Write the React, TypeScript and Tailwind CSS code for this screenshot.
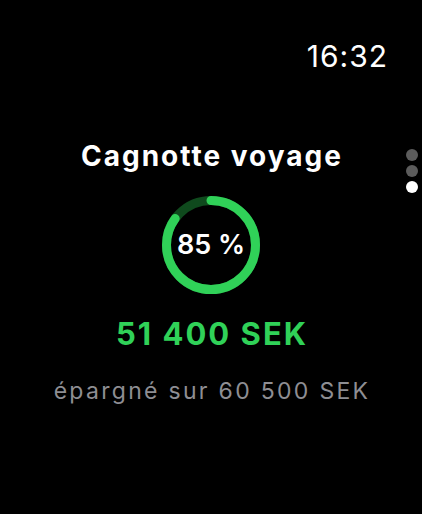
import React from "react";

function Ring({ pct }: { pct: number }) {
  const r = 44.5;
  const c = 2 * Math.PI * r;
  return (
    <div className="relative w-[100px] h-[100px]">
      <svg width="100" height="100" viewBox="0 0 100 100" className="absolute inset-0">
        <circle cx="50" cy="50" r={r} fill="none" stroke="#0f4a1d" strokeWidth="9" />
        <circle
          cx="50"
          cy="50"
          r={r}
          fill="none"
          stroke="#30d158"
          strokeWidth="9"
          strokeLinecap="round"
          strokeDasharray={`${c * pct} ${c}`}
          transform="rotate(-90 50 50)"
        />
      </svg>
      <div className="absolute inset-0 flex items-center justify-center text-white text-[27px] font-semibold tracking-[0px]">
        85 %
      </div>
    </div>
  );
}

export default function App() {
  return (
    <div
      className="relative w-[422px] h-[514px] bg-black overflow-hidden"
      style={{ fontFamily: "Inter, 'Noto Sans', sans-serif" }}
    >
      <div className="flex justify-end pr-[34px] pt-[39px]">
        <span className="text-white text-[30px] leading-[34px] tracking-[1px]">16:32</span>
      </div>
      <div className="absolute right-[4px] top-[149px] flex flex-col gap-[4px]">
        <div className="w-[12px] h-[12px] rounded-full bg-[#5c5c5c]" />
        <div className="w-[12px] h-[12px] rounded-full bg-[#5c5c5c]" />
        <div className="w-[12px] h-[12px] rounded-full bg-white" />
      </div>
      <div className="flex flex-col items-center mt-[66px]">
        <div className="text-white text-[28px] leading-[34px] font-bold tracking-[2px] pl-[2px]">
          Cagnotte voyage
        </div>
        <div className="mt-[22px]">
          <Ring pct={0.85} />
        </div>
        <div className="mt-[20px] text-[#30d158] text-[31px] leading-[38px] font-bold tracking-[2px] pl-[2px]">
          51 400 SEK
        </div>
        <div className="mt-[24px] text-[#8e8e93] text-[23px] leading-[28px] tracking-[2.3px] pl-[2px]">
          épargné sur 60 500 SEK
        </div>
      </div>
    </div>
  );
}
